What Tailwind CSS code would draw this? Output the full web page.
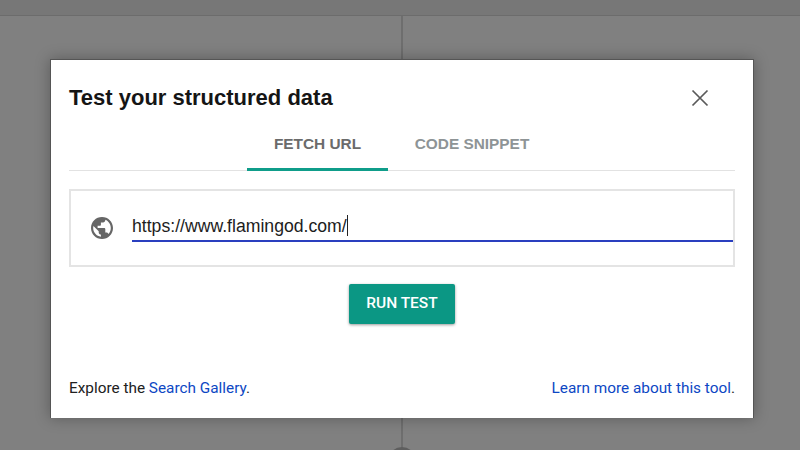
<!DOCTYPE html>
<html>
<head>
<meta charset="utf-8">
<script src="https://cdn.jsdelivr.net/npm/@tailwindcss/browser@4"></script>
</head>
<body class="m-0">
<div class="relative w-[800px] h-[450px] overflow-hidden bg-[#808080] font-['Liberation_Sans',sans-serif]">
  <div class="h-[16px] bg-[#777777] border-b border-[#6c6c6c]"></div>
  <div class="absolute left-[401px] top-[16px] w-[2px] h-[434px] bg-[#6e6e6e]"></div>
  <div class="absolute left-[388px] top-[447px] w-[28px] h-[28px] rounded-full bg-[#5e5e5e]"></div>
  <div class="absolute left-[50px] top-[59px] w-[704px] h-[359px] bg-white flex flex-col px-[18px] shadow-[0_0_14px_rgba(0,0,0,0.3)] border-t border-l border-r border-[#555555]">
    <div class="flex items-start justify-between pt-[27px] h-[62px]">
      <h1 class="text-[22px] leading-[22px] font-bold text-[#151515]">Test your structured data</h1>
      <svg class="mr-[26px] mt-[2px]" width="18" height="18" viewBox="0 0 18 18" fill="none" stroke="#5a5a5a" stroke-width="1.7"><path d="M1.500 1.500L16.500 16.500M16.500 1.500L1.500 16.500"/></svg>
    </div>
    <div class="flex justify-center h-[49px] border-b border-[#e2e2e2] pr-[1px]">
      <div class="w-[141px] h-[49px] pt-[13px] text-center text-[15.4px] leading-[17px] font-bold text-[#6b6b6b] border-b-[3px] border-[#0f9d8a]">FETCH URL</div>
      <div class="w-[168px] pt-[13px] text-center text-[15.4px] leading-[17px] font-bold text-[#8e9496]">CODE SNIPPET</div>
    </div>
    <div class="mt-[18px] h-[78px] border-2 border-[#e4e4e4] flex items-center pl-[19px]">
      <svg width="24" height="24" viewBox="0 0 24 24" fill="#666666"><path d="M12 1C5.900 1 1 5.900 1 12s4.900 11 11 11 11-4.900 11-11S18.100 1 12 1zM10.900 20.700C6.600 20.200 3.200 16.500 3.200 12c0-.7.1-1.300.2-2l5.300 5.300v1.100c0 1.200 1 2.200 2.200 2.200v2.100zm7.600-2.800c-.3-.9-1.100-1.500-2.100-1.500h-1.100v-3.300c0-.6-.5-1.100-1.100-1.100H7.600v-2.200h2.200c.6 0 1.100-.5 1.100-1.100V6.500h2.200c1.200 0 2.200-1 2.200-2.200v-.5c3.200 1.300 5.500 4.500 5.500 8.200 0 2.300-.9 4.400-2.300 5.900z"/></svg>
      <div class="ml-[18px] flex-1 h-[28px] border-b-2 border-[#2a3fbf] flex items-start pt-[1px] text-[17.65px] leading-[22px] text-[#1d1d1d]"><span>https://www.flamingod.com/</span><span class="w-[1px] h-[21px] bg-[#222222]"></span></div>
    </div>
    <div class="flex justify-center mt-[17px]">
      <div class="w-[106px] h-[40px] rounded-[2px] bg-[#0b9784] text-white flex items-center justify-center font-['Roboto',sans-serif] font-medium text-[15.5px] shadow-[0_1px_3px_rgba(0,0,0,0.4)]">RUN TEST</div>
    </div>
    <div class="flex justify-between mt-[auto] mb-[20px] text-[15.35px] leading-[20px] text-[#212121] font-['Roboto',sans-serif]">
      <div>Explore the <span class="text-[#0d47c4]">Search Gallery</span>.</div>
      <div><span class="text-[#0d47c4]">Learn more about this tool</span>.</div>
    </div>
  </div>
</div>
</body>
</html>
